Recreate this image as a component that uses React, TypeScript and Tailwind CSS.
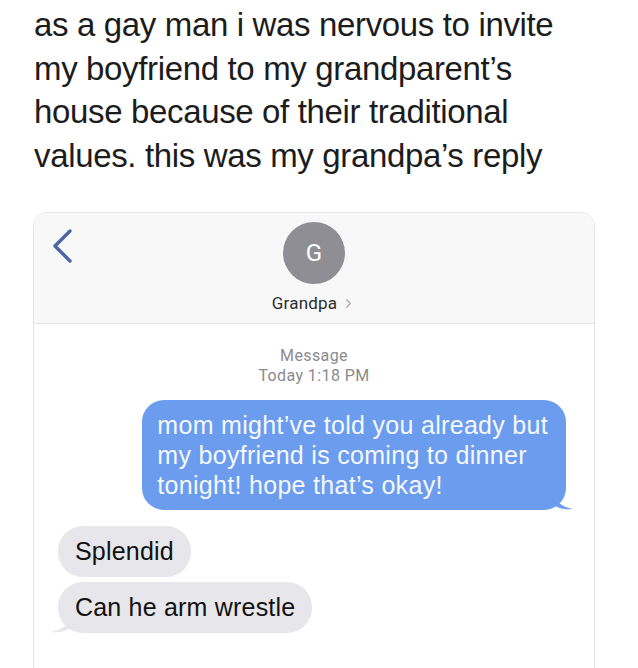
import { ChevronRight } from 'lucide-react';

const sans = { fontFamily: '"Liberation Sans", Arial, sans-serif' };
const roboto = { fontFamily: 'Roboto, "Liberation Sans", sans-serif' };

function Tail({ side, color }: { side: 'left' | 'right'; color: string }) {
    // small iMessage-style curl under the bubble's bottom corner
    if (side === 'right') {
        return (
            <svg className="absolute -right-[8px] bottom-0" width="20" height="15" viewBox="0 0 20 15">
                <path d="M0 0 C2 6 7 12 19 14 C12 15 5 14 0 10 Z" fill={color} />
            </svg>
        );
    }
    return (
        <svg className="absolute -left-[8px] bottom-0" width="20" height="15" viewBox="0 0 20 15">
            <path d="M20 0 C18 6 13 12 1 14 C8 15 15 14 20 10 Z" fill={color} />
        </svg>
    );
}

export default function App() {
    return (
        <div className="w-[638px] h-[668px] bg-white overflow-hidden" style={sans}>
            {/* Caption */}
            <div className="pl-[34px] pt-[3px] text-[33px] leading-[43.5px] text-[#1c1c1c] tracking-[-0.35px]">
                <p>as a gay man i was nervous to invite</p>
                <p>my boyfriend to my grandparent’s</p>
                <p>house because of their traditional</p>
                <p>values. this was my grandpa’s reply</p>
            </div>

            {/* Screenshot card */}
            <div className="ml-[33px] mt-[35px] w-[562px] h-[500px] border border-[#e6e6e6] rounded-t-[14px] overflow-hidden">
                {/* Header */}
                <div className="grid grid-cols-[1fr_auto_1fr] h-[111px] bg-[#f8f8f8] border-b border-[#e4e4e4]">
                    <div className="pl-[16px] pt-[15px]">
                        <svg width="24" height="36" viewBox="0 0 24 36">
                            <path d="M20 3 L5 18 L20 33" fill="none" stroke="#4a66a6" strokeWidth="3.4" strokeLinecap="round" strokeLinejoin="round" />
                        </svg>
                    </div>
                    <div className="flex flex-col items-center pt-[9px]">
                        <div className="w-[62px] h-[62px] rounded-full bg-[#8e8e94] flex items-center justify-center text-white text-[24px]" style={roboto}>
                            G
                        </div>
                        <div className="mt-[7px] flex items-center gap-[4px] text-[17px] text-[#2c2c2c] tracking-[0.2px]" style={roboto}>
                            Grandpa
                            <ChevronRight className="w-[15px] h-[15px] text-[#a5a5aa]" strokeWidth={1.8} />
                        </div>
                    </div>
                    <div />
                </div>

                {/* Conversation */}
                <div className="bg-white pt-[22px]">
                    <div className="text-center text-[16px] leading-[20px] text-[#8a8a8e] tracking-[0.4px]" style={roboto}>
                        <p>Message</p>
                        <p>Today 1:18 PM</p>
                    </div>

                    <div className="flex justify-end pr-[28px] mt-[14px]">
                        <div className="relative">
                            <div className="relative z-10 bg-[#6c9cee] rounded-[22px] pl-[15px] pr-[18px] pt-[10px] pb-[10px] text-[25px] leading-[30px] text-[#f4f8ff] tracking-[0.3px]">
                                <p>mom might’ve told you already but</p>
                                <p>my boyfriend is coming to dinner</p>
                                <p>tonight! hope that’s okay!</p>
                            </div>
                            <Tail side="right" color="#6c9cee" />
                        </div>
                    </div>

                    <div className="flex flex-col items-start pl-[24px] mt-[16px] gap-[5px]">
                        <div className="bg-[#e6e6eb] rounded-[25px] px-[17px] py-[10px] text-[25px] leading-[31px] text-[#111] tracking-[0.2px]">
                            Splendid
                        </div>
                        <div className="relative">
                            <div className="relative z-10 bg-[#e6e6eb] rounded-[25px] px-[17px] py-[10px] text-[25px] leading-[31px] text-[#111] tracking-[0.2px]">
                                Can he arm wrestle
                            </div>
                            <Tail side="left" color="#e6e6eb" />
                        </div>
                    </div>
                </div>
            </div>
        </div>
    );
}
